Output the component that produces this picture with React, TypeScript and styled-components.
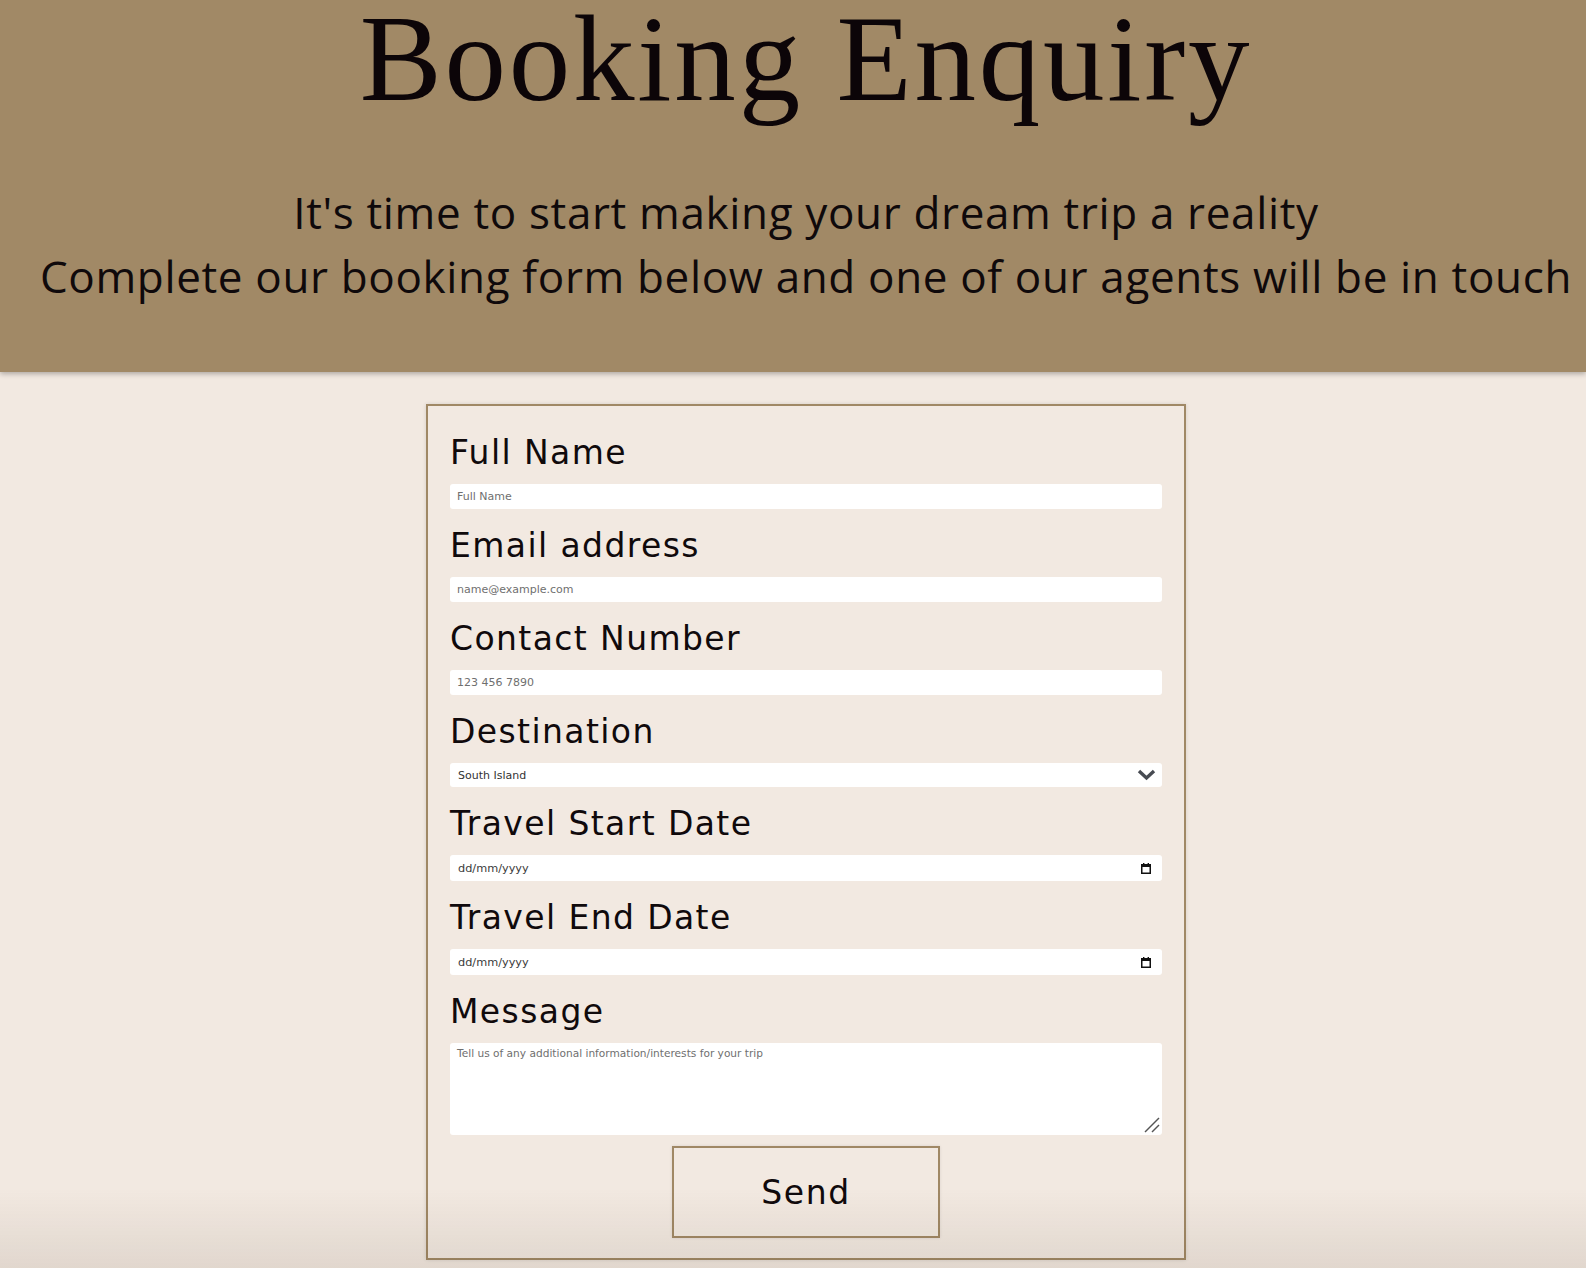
import React from "react";
import styled, { createGlobalStyle } from "styled-components";

const GlobalStyle = createGlobalStyle`
  html, body {
    margin: 0;
    padding: 0;
    background: #f2e9e1;
  }
  body {
    font-family: "DejaVu Sans", "Open Sans", sans-serif;
    color: #100a0c;
  }
  * { box-sizing: border-box; }
`;

const Page = styled.div`
  min-height: 1268px;
  background: #f2e9e1;
  display: flex;
  flex-direction: column;
`;

const Header = styled.header`
  height: 372px;
  background: #a18966;
  box-shadow: 0 2px 5px rgba(0, 0, 0, 0.28);
  display: flex;
  flex-direction: column;
  align-items: center;
  padding-left: 26px;
  position: relative;
  z-index: 1;
`;

const Title = styled.h1`
  margin: 0;
  font-family: "Liberation Serif", "Times New Roman", serif;
  font-weight: 400;
  font-size: 123px;
  line-height: 117px;
  color: #0c0508;
  letter-spacing: 2.8px;
`;

const Subtitle = styled.p`
  margin: 63px 0 0;
  font-family: "Open Sans", sans-serif;
  font-weight: 400;
  font-size: 44px;
  line-height: 64px;
  letter-spacing: 0.65px;
  text-align: center;
  color: #0f090b;
  white-space: nowrap;
`;

const Main = styled.main`
  display: flex;
  justify-content: center;
  padding-left: 26px;
`;

const Form = styled.form`
  margin-top: 32px;
  width: 760px;
  border: 2px solid #a08865;
  box-shadow: 0 0 4px rgba(0, 0, 0, 0.12);
  padding: 27px 22px 20px;
  display: flex;
  flex-direction: column;
  gap: 17px;
`;

const Field = styled.div`
  display: flex;
  flex-direction: column;
  position: relative;
`;

const Label = styled.label`
  font-family: "DejaVu Sans", sans-serif;
  font-size: 33px;
  line-height: 40px;
  letter-spacing: 1.4px;
  margin-bottom: 11px;
  color: #100a0c;
`;

const TextInput = styled.input`
  width: 100%;
  height: 25px;
  border: none;
  border-radius: 3px;
  background: #fff;
  padding: 0 7px;
  font-family: "DejaVu Sans", sans-serif;
  font-size: 11px;
  color: #333;
  outline: none;
  &::placeholder {
    color: #6f6f6f;
  }
`;

const SelectWrap = styled.div`
  position: relative;
  height: 24px;
`;

const Select = styled.select`
  appearance: none;
  width: 100%;
  height: 24px;
  border: none;
  border-radius: 3px;
  background: #fff;
  padding: 0 8px;
  font-family: "DejaVu Sans", sans-serif;
  font-size: 11px;
  color: #333;
  outline: none;
`;

const Chevron = styled.svg`
  position: absolute;
  right: 6px;
  top: 6px;
  pointer-events: none;
`;

const DateBox = styled.div`
  height: 26px;
  border-radius: 3px;
  background: #fff;
  display: flex;
  align-items: center;
  padding: 0 11px 0 8px;
`;

const DateInput = styled.input`
  flex: 1;
  border: none;
  background: transparent;
  font-family: "DejaVu Sans", sans-serif;
  font-size: 11.3px;
  outline: none;
  padding: 0;
  &::placeholder {
    color: #3a3a3a;
  }
`;

const AreaWrap = styled.div`
  position: relative;
`;

const TextArea = styled.textarea`
  width: 100%;
  height: 92px;
  border: none;
  border-radius: 3px;
  background: #fff;
  padding: 4px 7px;
  font-family: "DejaVu Sans", sans-serif;
  font-size: 10.6px;
  color: #333;
  outline: none;
  resize: none;
  display: block;
  &::placeholder {
    color: #6f6f6f;
  }
`;

const ResizeGrip = styled.svg`
  position: absolute;
  right: 2px;
  bottom: 2px;
  pointer-events: none;
`;

const SendRow = styled.div`
  display: flex;
  justify-content: center;
  margin-top: -6px;
`;

const SendButton = styled.button`
  width: 268px;
  height: 92px;
  background: transparent;
  border: 2px solid #a08865;
  font-family: "DejaVu Sans", sans-serif;
  font-size: 33px;
  letter-spacing: 1.6px;
  color: #100a0c;
  cursor: pointer;
  box-shadow: 0 0 3px rgba(0, 0, 0, 0.1);
`;

const BottomShade = styled.div`
  position: fixed;
  left: 0;
  right: 0;
  bottom: 0;
  height: 80px;
  pointer-events: none;
  background: linear-gradient(to bottom, rgba(60, 40, 20, 0), rgba(60, 40, 20, 0.09));
`;

const CalendarIcon = () => (
  <svg width="10" height="11" viewBox="0 0 10 11">
    <rect x="0.75" y="1.75" width="8.5" height="8.5" fill="none" stroke="#111" strokeWidth="1.5" />
    <rect x="0" y="1" width="10" height="3" fill="#111" />
    <rect x="2" y="0" width="1.4" height="2" fill="#111" />
    <rect x="6.6" y="0" width="1.4" height="2" fill="#111" />
  </svg>
);

export default function App() {
  return (
    <>
      <GlobalStyle />
      <Page>
        <Header>
          <Title>Booking Enquiry</Title>
          <Subtitle>
            It's time to start making your dream trip a reality
            <br />
            Complete our booking form below and one of our agents will be in touch
          </Subtitle>
        </Header>
        <Main>
          <Form onSubmit={(e) => e.preventDefault()}>
            <Field>
              <Label htmlFor="name">Full Name</Label>
              <TextInput id="name" type="text" placeholder="Full Name" />
            </Field>
            <Field>
              <Label htmlFor="email">Email address</Label>
              <TextInput id="email" type="email" placeholder="name@example.com" />
            </Field>
            <Field>
              <Label htmlFor="phone">Contact Number</Label>
              <TextInput id="phone" type="tel" placeholder="123 456 7890" />
            </Field>
            <Field>
              <Label htmlFor="dest">Destination</Label>
              <SelectWrap>
                <Select id="dest" defaultValue="south">
                  <option value="south">South Island</option>
                  <option value="north">North Island</option>
                </Select>
                <Chevron width="19" height="12" viewBox="0 0 19 12">
                  <polyline points="2,2 9.5,9 17,2" fill="none" stroke="#474b52" strokeWidth="3.4" strokeLinecap="butt" />
                </Chevron>
              </SelectWrap>
            </Field>
            <Field>
              <Label htmlFor="start">Travel Start Date</Label>
              <DateBox>
                <DateInput id="start" type="text" placeholder="dd/mm/yyyy" />
                <CalendarIcon />
              </DateBox>
            </Field>
            <Field>
              <Label htmlFor="end">Travel End Date</Label>
              <DateBox>
                <DateInput id="end" type="text" placeholder="dd/mm/yyyy" />
                <CalendarIcon />
              </DateBox>
            </Field>
            <Field>
              <Label htmlFor="msg">Message</Label>
              <AreaWrap>
                <TextArea id="msg" placeholder="Tell us of any additional information/interests for your trip" />
                <ResizeGrip width="16" height="16" viewBox="0 0 16 16">
                  <line x1="1" y1="15" x2="15" y2="1" stroke="#555" strokeWidth="1.4" />
                  <line x1="8" y1="15" x2="15" y2="8" stroke="#555" strokeWidth="1.4" />
                </ResizeGrip>
              </AreaWrap>
            </Field>
            <SendRow>
              <SendButton type="submit">Send</SendButton>
            </SendRow>
          </Form>
        </Main>
        <BottomShade />
      </Page>
    </>
  );
}
